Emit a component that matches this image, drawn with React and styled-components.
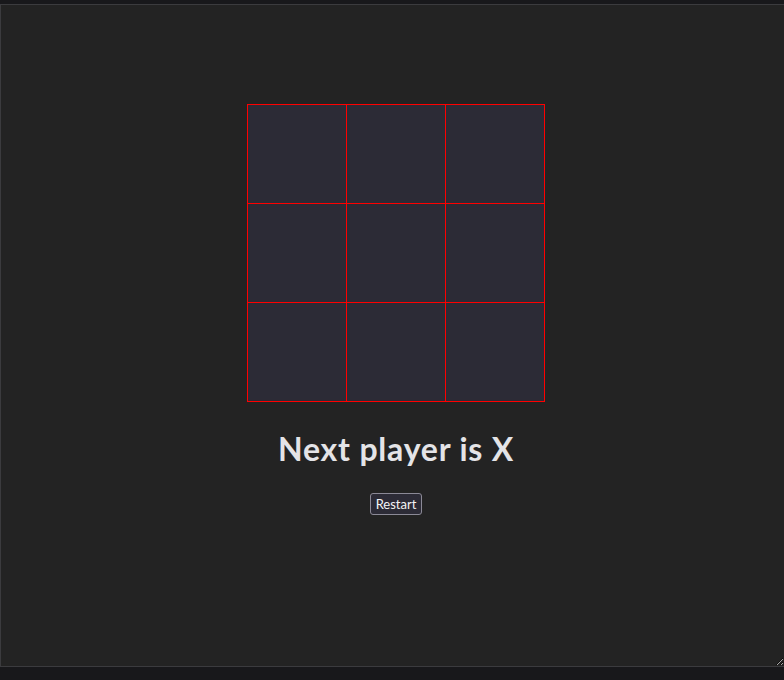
import styled, { createGlobalStyle } from 'styled-components';

const GlobalStyle = createGlobalStyle`
  html, body {
    margin: 0;
    padding: 0;
    background: #18181b;
    overflow: hidden;
  }
  body {
    padding-top: 4px;
  }
`;

const Frame = styled.div`
  box-sizing: border-box;
  width: 784px;
  height: 663px;
  border: 1px solid #3b3b3e;
  border-right: none;
  background: #232323;
  resize: both;
  overflow: hidden;
  display: flex;
  flex-direction: column;
  align-items: center;
  padding: 99px 0 0 7px;
  font-family: Lato, "Noto Sans", sans-serif;
  color: #e4e4e7;
`;

const Board = styled.div`
  display: grid;
  grid-template-columns: repeat(3, 98px);
  grid-template-rows: repeat(3, 98px);
  gap: 1px;
  padding: 1px;
  background: #ff0000;
`;

const Square = styled.button`
  border: none;
  padding: 0;
  margin: 0;
  background: #2c2b36;
  color: #e4e4e7;
  font-family: inherit;
  font-size: 48px;
  font-weight: 700;
  cursor: pointer;
`;

const Status = styled.h1`
  margin: 27px 0 0;
  font-size: 32px;
  line-height: 40px;
  font-weight: 700;
  letter-spacing: 0.8px;
  color: #e4e4e7;
`;

const RestartButton = styled.button`
  margin-top: 24px;
  height: 22px;
  padding: 0 5px;
  border: 1px solid #8b8996;
  border-radius: 3px;
  background: #2c2b36;
  color: #f4f4f5;
  font-family: inherit;
  font-size: 13px;
  cursor: pointer;
`;

export default function App() {
  const squares = Array(9).fill(null);
  return (
    <>
      <GlobalStyle />
      <Frame>
        <Board>
          {squares.map((v, i) => (
            <Square key={i}>{v}</Square>
          ))}
        </Board>
        <Status>Next player is X</Status>
        <RestartButton>Restart</RestartButton>
      </Frame>
    </>
  );
}
